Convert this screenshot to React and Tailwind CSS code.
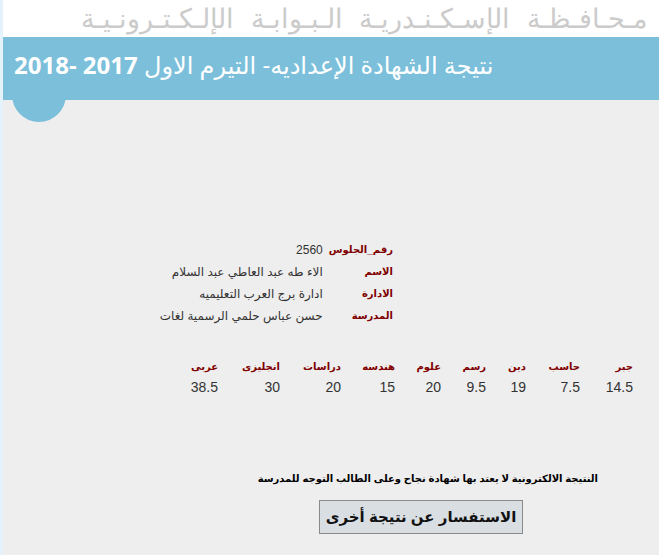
import React from 'react';

const info = [
    { label: 'رقم_الجلوس', value: '2560' },
    { label: 'الاسم', value: 'الاء طه عبد العاطي عبد السلام' },
    { label: 'الادارة', value: 'ادارة برج العرب التعليميه' },
    { label: 'المدرسة', value: 'حسن عباس حلمي الرسمية لغات' },
];

// subject columns, right to left, with their fixed widths
const grades = [
    { subject: 'جبر', mark: '14.5', w: 'w-[53px]' },
    { subject: 'حاسب', mark: '7.5', w: 'w-[54px]' },
    { subject: 'دين', mark: '19', w: 'w-[40px]' },
    { subject: 'رسم', mark: '9.5', w: 'w-[45px]' },
    { subject: 'علوم', mark: '20', w: 'w-[46px]' },
    { subject: 'هندسه', mark: '15', w: 'w-[54px]' },
    { subject: 'دراسات', mark: '20', w: 'w-[61px]' },
    { subject: 'انجليزى', mark: '30', w: 'w-[62px]' },
    { subject: 'عربى', mark: '38.5', w: 'w-[30px]' },
];

export default function App() {
    return (
        <div className="flex min-h-screen bg-[#eeeeee] font-['Liberation_Sans','DejaVu_Sans',sans-serif]">
            <div className="w-[3px] shrink-0 bg-[#e4f2fb]" />

            <div className="relative flex-1">
                {/* portal title */}
                <div className="flex h-[37px] items-center justify-end bg-white pr-[12px]">
                    <span dir="rtl" className="whitespace-nowrap text-[27px] leading-none tracking-[6px] [word-spacing:8px] text-[#cbcbcb] font-['DejaVu_Sans',sans-serif] font-light">
                        مـحـافـظـة الإسـكـنـدريـة الـبـوابـة الإلـكـتـرونـيـة
                    </span>
                </div>

                {/* blue band with the round tab under it */}
                <div className="absolute left-[9px] top-[68px] h-[54px] w-[54px] rounded-full bg-[#7bbfdb]" />
                <div className="relative flex h-[63px] items-center bg-[#7bbfdb] pb-[8px] pl-[11px]">
                    <h1 dir="rtl" className="whitespace-nowrap text-left text-[24px] font-normal text-white font-['Open_Sans','DejaVu_Sans',sans-serif]">
                        نتيجة الشهادة الإعداديه- التيرم الاول <b>2017 -2018</b>
                    </h1>
                </div>

                {/* student info */}
                <div className="flex justify-end pr-[266px] pt-[139px]">
                    <div dir="rtl" className="grid grid-cols-[auto_auto] gap-x-[6px]">
                        {info.map((row) => (
                            <React.Fragment key={row.label}>
                                <div className="h-[22px] whitespace-nowrap text-[10px] font-bold leading-[22px] text-[#800000]">{row.label}</div>
                                <div className="h-[22px] whitespace-nowrap text-[12px] leading-[22px] text-[#333333]">{row.value}</div>
                            </React.Fragment>
                        ))}
                    </div>
                </div>

                {/* grades */}
                <div className="flex justify-end pr-[26px] pt-[30px]">
                    <div dir="rtl" className="flex">
                        {grades.map((g) => (
                            <div key={g.subject} className={`${g.w} flex flex-col`}>
                                <span className="h-[20px] whitespace-nowrap text-[10px] font-bold leading-[20px] text-[#800000]">{g.subject}</span>
                                <span className="h-[20px] text-[14px] leading-[20px] text-[#333333]">{g.mark}</span>
                            </div>
                        ))}
                    </div>
                </div>

                {/* notice + button */}
                <div className="flex justify-end pr-[61px] pt-[74px]">
                    <p dir="rtl" className="whitespace-nowrap text-[10px] font-bold text-black">
                        النتيجة الالكترونية لا يعتد بها شهادة نجاح وعلى الطالب التوجه للمدرسة
                    </p>
                </div>
                <div className="flex justify-end pr-[136px] pt-[14px]">
                    <button className="h-[34px] w-[204px] whitespace-nowrap border border-[#8a8a8a] bg-[#d9dee3] text-[15px] font-bold text-[#111]">
                        الاستفسار عن نتيجة أخرى
                    </button>
                </div>
            </div>
        </div>
    );
}
